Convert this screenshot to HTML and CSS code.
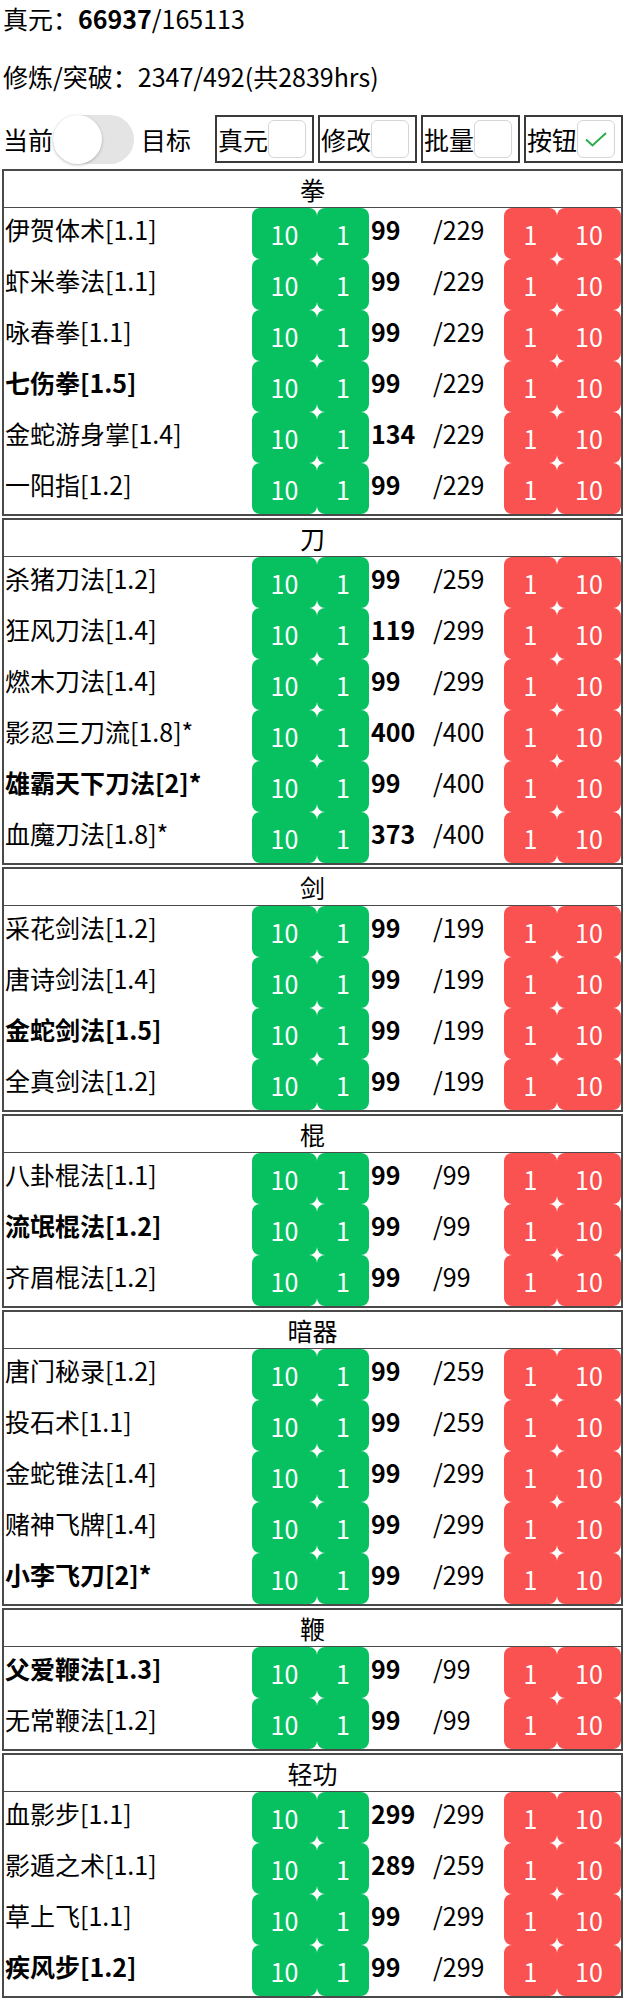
FILE: index.html
```html
<!DOCTYPE html>
<html lang="zh">
<head>
<meta charset="utf-8">
<title>武学</title>
<link rel="stylesheet" href="styles.css">
</head>
<body>
<div class="line1">真元：<b>66937</b>/165113</div>
<div class="line2">修炼/突破：2347/492(共2839hrs)</div>
<div class="toolbar">
  <span class="tlabel">当前</span>
  <span class="switch"><span class="knob"></span></span>
  <span class="tlabel tgt">目标</span>
  <span class="opt"><span class="olabel">真元</span><span class="cb"></span></span>
  <span class="opt"><span class="olabel">修改</span><span class="cb"></span></span>
  <span class="opt"><span class="olabel">批量</span><span class="cb"></span></span>
  <span class="opt"><span class="olabel">按钮</span><span class="cb"><svg class="chk" viewBox="0 0 22 15" width="22" height="15"><path d="M1 7.5 L7.5 13.5 L21 1" fill="none" stroke="#2aae4a" stroke-width="2"/></svg></span></span>
</div>

<div class="sec">
  <div class="sec-h">拳</div>
  <div class="row"><span class="name">伊贺体术[1.1]</span><span class="grp"><span class="btn g w10">10</span><span class="btn g w1">1</span></span><span class="cur">99</span><span class="max">/229</span><span class="grp"><span class="btn r r1">1</span><span class="btn r r10">10</span></span></div>
  <div class="row"><span class="name">虾米拳法[1.1]</span><span class="grp"><span class="btn g w10">10</span><span class="btn g w1">1</span></span><span class="cur">99</span><span class="max">/229</span><span class="grp"><span class="btn r r1">1</span><span class="btn r r10">10</span></span></div>
  <div class="row"><span class="name">咏春拳[1.1]</span><span class="grp"><span class="btn g w10">10</span><span class="btn g w1">1</span></span><span class="cur">99</span><span class="max">/229</span><span class="grp"><span class="btn r r1">1</span><span class="btn r r10">10</span></span></div>
  <div class="row"><span class="name bold">七伤拳[1.5]</span><span class="grp"><span class="btn g w10">10</span><span class="btn g w1">1</span></span><span class="cur">99</span><span class="max">/229</span><span class="grp"><span class="btn r r1">1</span><span class="btn r r10">10</span></span></div>
  <div class="row"><span class="name">金蛇游身掌[1.4]</span><span class="grp"><span class="btn g w10">10</span><span class="btn g w1">1</span></span><span class="cur">134</span><span class="max">/229</span><span class="grp"><span class="btn r r1">1</span><span class="btn r r10">10</span></span></div>
  <div class="row"><span class="name">一阳指[1.2]</span><span class="grp"><span class="btn g w10">10</span><span class="btn g w1">1</span></span><span class="cur">99</span><span class="max">/229</span><span class="grp"><span class="btn r r1">1</span><span class="btn r r10">10</span></span></div>
</div>

<div class="sec">
  <div class="sec-h">刀</div>
  <div class="row"><span class="name">杀猪刀法[1.2]</span><span class="grp"><span class="btn g w10">10</span><span class="btn g w1">1</span></span><span class="cur">99</span><span class="max">/259</span><span class="grp"><span class="btn r r1">1</span><span class="btn r r10">10</span></span></div>
  <div class="row"><span class="name">狂风刀法[1.4]</span><span class="grp"><span class="btn g w10">10</span><span class="btn g w1">1</span></span><span class="cur">119</span><span class="max">/299</span><span class="grp"><span class="btn r r1">1</span><span class="btn r r10">10</span></span></div>
  <div class="row"><span class="name">燃木刀法[1.4]</span><span class="grp"><span class="btn g w10">10</span><span class="btn g w1">1</span></span><span class="cur">99</span><span class="max">/299</span><span class="grp"><span class="btn r r1">1</span><span class="btn r r10">10</span></span></div>
  <div class="row"><span class="name">影忍三刀流[1.8]*</span><span class="grp"><span class="btn g w10">10</span><span class="btn g w1">1</span></span><span class="cur">400</span><span class="max">/400</span><span class="grp"><span class="btn r r1">1</span><span class="btn r r10">10</span></span></div>
  <div class="row"><span class="name bold">雄霸天下刀法[2]*</span><span class="grp"><span class="btn g w10">10</span><span class="btn g w1">1</span></span><span class="cur">99</span><span class="max">/400</span><span class="grp"><span class="btn r r1">1</span><span class="btn r r10">10</span></span></div>
  <div class="row"><span class="name">血魔刀法[1.8]*</span><span class="grp"><span class="btn g w10">10</span><span class="btn g w1">1</span></span><span class="cur">373</span><span class="max">/400</span><span class="grp"><span class="btn r r1">1</span><span class="btn r r10">10</span></span></div>
</div>

<div class="sec">
  <div class="sec-h">剑</div>
  <div class="row"><span class="name">采花剑法[1.2]</span><span class="grp"><span class="btn g w10">10</span><span class="btn g w1">1</span></span><span class="cur">99</span><span class="max">/199</span><span class="grp"><span class="btn r r1">1</span><span class="btn r r10">10</span></span></div>
  <div class="row"><span class="name">唐诗剑法[1.4]</span><span class="grp"><span class="btn g w10">10</span><span class="btn g w1">1</span></span><span class="cur">99</span><span class="max">/199</span><span class="grp"><span class="btn r r1">1</span><span class="btn r r10">10</span></span></div>
  <div class="row"><span class="name bold">金蛇剑法[1.5]</span><span class="grp"><span class="btn g w10">10</span><span class="btn g w1">1</span></span><span class="cur">99</span><span class="max">/199</span><span class="grp"><span class="btn r r1">1</span><span class="btn r r10">10</span></span></div>
  <div class="row"><span class="name">全真剑法[1.2]</span><span class="grp"><span class="btn g w10">10</span><span class="btn g w1">1</span></span><span class="cur">99</span><span class="max">/199</span><span class="grp"><span class="btn r r1">1</span><span class="btn r r10">10</span></span></div>
</div>

<div class="sec">
  <div class="sec-h">棍</div>
  <div class="row"><span class="name">八卦棍法[1.1]</span><span class="grp"><span class="btn g w10">10</span><span class="btn g w1">1</span></span><span class="cur">99</span><span class="max">/99</span><span class="grp"><span class="btn r r1">1</span><span class="btn r r10">10</span></span></div>
  <div class="row"><span class="name bold">流氓棍法[1.2]</span><span class="grp"><span class="btn g w10">10</span><span class="btn g w1">1</span></span><span class="cur">99</span><span class="max">/99</span><span class="grp"><span class="btn r r1">1</span><span class="btn r r10">10</span></span></div>
  <div class="row"><span class="name">齐眉棍法[1.2]</span><span class="grp"><span class="btn g w10">10</span><span class="btn g w1">1</span></span><span class="cur">99</span><span class="max">/99</span><span class="grp"><span class="btn r r1">1</span><span class="btn r r10">10</span></span></div>
</div>

<div class="sec">
  <div class="sec-h">暗器</div>
  <div class="row"><span class="name">唐门秘录[1.2]</span><span class="grp"><span class="btn g w10">10</span><span class="btn g w1">1</span></span><span class="cur">99</span><span class="max">/259</span><span class="grp"><span class="btn r r1">1</span><span class="btn r r10">10</span></span></div>
  <div class="row"><span class="name">投石术[1.1]</span><span class="grp"><span class="btn g w10">10</span><span class="btn g w1">1</span></span><span class="cur">99</span><span class="max">/259</span><span class="grp"><span class="btn r r1">1</span><span class="btn r r10">10</span></span></div>
  <div class="row"><span class="name">金蛇锥法[1.4]</span><span class="grp"><span class="btn g w10">10</span><span class="btn g w1">1</span></span><span class="cur">99</span><span class="max">/299</span><span class="grp"><span class="btn r r1">1</span><span class="btn r r10">10</span></span></div>
  <div class="row"><span class="name">赌神飞牌[1.4]</span><span class="grp"><span class="btn g w10">10</span><span class="btn g w1">1</span></span><span class="cur">99</span><span class="max">/299</span><span class="grp"><span class="btn r r1">1</span><span class="btn r r10">10</span></span></div>
  <div class="row"><span class="name bold">小李飞刀[2]*</span><span class="grp"><span class="btn g w10">10</span><span class="btn g w1">1</span></span><span class="cur">99</span><span class="max">/299</span><span class="grp"><span class="btn r r1">1</span><span class="btn r r10">10</span></span></div>
</div>

<div class="sec">
  <div class="sec-h">鞭</div>
  <div class="row"><span class="name bold">父爱鞭法[1.3]</span><span class="grp"><span class="btn g w10">10</span><span class="btn g w1">1</span></span><span class="cur">99</span><span class="max">/99</span><span class="grp"><span class="btn r r1">1</span><span class="btn r r10">10</span></span></div>
  <div class="row"><span class="name">无常鞭法[1.2]</span><span class="grp"><span class="btn g w10">10</span><span class="btn g w1">1</span></span><span class="cur">99</span><span class="max">/99</span><span class="grp"><span class="btn r r1">1</span><span class="btn r r10">10</span></span></div>
</div>

<div class="sec">
  <div class="sec-h">轻功</div>
  <div class="row"><span class="name">血影步[1.1]</span><span class="grp"><span class="btn g w10">10</span><span class="btn g w1">1</span></span><span class="cur">299</span><span class="max">/299</span><span class="grp"><span class="btn r r1">1</span><span class="btn r r10">10</span></span></div>
  <div class="row"><span class="name">影遁之术[1.1]</span><span class="grp"><span class="btn g w10">10</span><span class="btn g w1">1</span></span><span class="cur">289</span><span class="max">/259</span><span class="grp"><span class="btn r r1">1</span><span class="btn r r10">10</span></span></div>
  <div class="row"><span class="name">草上飞[1.1]</span><span class="grp"><span class="btn g w10">10</span><span class="btn g w1">1</span></span><span class="cur">99</span><span class="max">/299</span><span class="grp"><span class="btn r r1">1</span><span class="btn r r10">10</span></span></div>
  <div class="row"><span class="name bold">疾风步[1.2]</span><span class="grp"><span class="btn g w10">10</span><span class="btn g w1">1</span></span><span class="cur">99</span><span class="max">/299</span><span class="grp"><span class="btn r r1">1</span><span class="btn r r10">10</span></span></div>
</div>
</body>
</html>
```

FILE: styles.css
```css
html, body {
  margin: 0;
  padding: 0;
  background: #fff;
}
body {
  padding: 0 3px 0 2px;
  font-family: "Noto Sans CJK SC", "Noto Sans", sans-serif;
  font-size: 25px;
  color: #000;
}
.line1 {
  height: 36px;
  line-height: 36px;
  padding-left: 1px;
}
.line2 {
  margin-top: 22px;
  height: 36px;
  line-height: 36px;
  padding-left: 1px;
}
.toolbar {
  margin-top: 21px;
  height: 48px;
  display: flex;
  align-items: center;
}
.tlabel {
  flex: none;
  white-space: nowrap;
  width: 50px;
  padding-left: 1px;
  line-height: 36px;
}
.tgt {
  margin-left: 6px;
  margin-right: 24px;
}
.switch {
  position: relative;
  width: 81px;
  height: 49px;
  border-radius: 25px;
  background: #e4e4e4;
  flex: none;
}
.knob {
  position: absolute;
  left: 0;
  top: 0;
  width: 49px;
  height: 49px;
  border-radius: 50%;
  background: #fff;
  box-shadow: 0 1px 3px rgba(0, 0, 0, 0.25);
}
.opt {
  display: flex;
  align-items: center;
  box-sizing: border-box;
  width: 99px;
  height: 48px;
  border: 2px solid #3a3a3a;
  margin-right: 4px;
  padding-left: 1px;
  flex: none;
}
.opt:last-child {
  margin-right: 0;
}
.olabel {
  flex: none;
  white-space: nowrap;
  width: 50px;
  line-height: 36px;
}
.cb {
  flex: none;
  box-sizing: border-box;
  width: 38px;
  height: 38px;
  border: 1px solid #d6d6d6;
  border-radius: 6px;
  background: #fff;
  display: flex;
  align-items: center;
  justify-content: center;
}
.chk {
  display: block;
}
.sec {
  margin-top: 6px;
  border: 2px solid #4a4a4a;
}
.sec + .sec {
  margin-top: 2px;
}
.sec-h {
  height: 36px;
  line-height: 36px;
  text-align: center;
  border-bottom: 1px solid #4a4a4a;
}
.row {
  display: grid;
  grid-template-columns: 248px 117px 63px 72px 117px;
  height: 51px;
}
.name {
  padding-left: 1px;
  padding-top: 3px;
  line-height: 36px;
  white-space: nowrap;
}
.bold {
  font-weight: bold;
}
.cur {
  font-weight: bold;
  padding-left: 2px;
  padding-top: 3px;
  line-height: 36px;
}
.max {
  padding-left: 1px;
  padding-top: 3px;
  line-height: 36px;
}
.grp {
  display: flex;
}
.btn {
  height: 51px;
  line-height: 53px;
  text-align: center;
  color: #fff;
  border-radius: 8px;
}
.g {
  background: #07c160;
}
.r {
  background: #fa5151;
}
.w10 { width: 65px; }
.w1 { width: 52px; }
.r1 { width: 53px; }
.r10 { width: 64px; }
```
